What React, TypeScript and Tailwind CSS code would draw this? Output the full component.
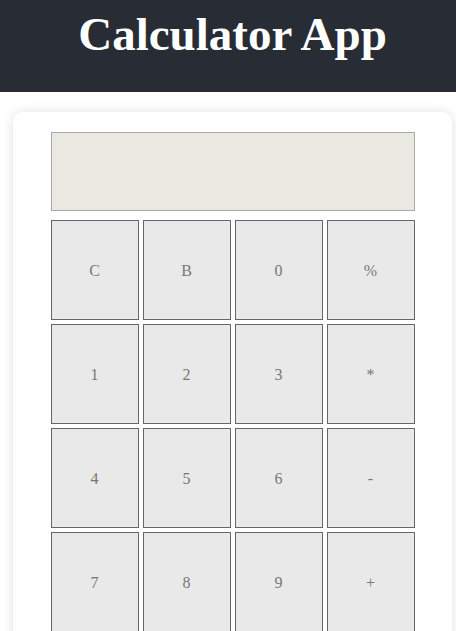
const keys = ["C", "B", "0", "%", "1", "2", "3", "*", "4", "5", "6", "-", "7", "8", "9", "+"];

export default function App() {
  return (
    <div className="min-h-screen bg-white" style={{ fontFamily: '"Liberation Serif", serif' }}>
      <header className="bg-[#282c34] h-[92px] pl-[9px] pt-[11px] text-center">
        <h1 className="text-white text-[47px] leading-[47px] font-bold">Calculator App</h1>
      </header>
      <div className="pt-[20px]">
        <div className="ml-[13px] w-[439px] bg-white rounded-[10px] shadow-[0_0_12px_rgba(0,0,0,0.12)] pt-[20px] pb-[20px]">
          <div className="w-[364px] mx-auto">
            <div className="h-[79px] bg-[#eae9e1] border border-[#a9a9a9]" />
            <div className="grid grid-cols-4 gap-[4px] mt-[9px]">
              {keys.map((k) => (
                <button
                  key={k}
                  className="h-[100px] pt-[2px] bg-[#e9e9e9] border border-[#666] text-[#777] text-[16px]"
                  style={{ fontFamily: '"Liberation Serif", serif' }}
                >
                  {k}
                </button>
              ))}
            </div>
          </div>
        </div>
      </div>
    </div>
  );
}
